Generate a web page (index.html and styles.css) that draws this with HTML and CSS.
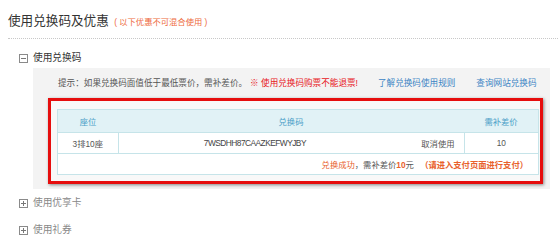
FILE: index.html
```html
<!DOCTYPE html>
<html lang="zh-CN">
<head>
<meta charset="utf-8">
<link rel="stylesheet" href="styles.css">
</head>
<body>
<div class="page">
  <div class="title-bar">
    <span class="title">使用兑换码及优惠</span>
    <span class="subtitle">( 以下优惠不可混合使用 )</span>
  </div>

  <div class="section-head"><span class="toggle minus"></span><span>使用兑换码</span></div>
  <div class="panel">
    <div class="tip">
      <span class="tip-text">提示：如果兑换码面值低于最低票价，需补差价。</span>
      <span class="warn">※ 使用兑换码购票不能退票!</span>
      <a class="link link-rule">了解兑换码使用规则</a>
      <a class="link link-query">查询网站兑换码</a>
    </div>
    <div class="highlight">
      <table class="codes">
        <thead>
          <tr>
            <th class="c-seat">座位</th>
            <th class="c-code">兑换码</th>
            <th class="c-price">需补差价</th>
          </tr>
        </thead>
        <tbody>
          <tr>
            <td class="c-seat">3排10座</td>
            <td class="c-code"><div class="code-cell"><span class="code">7WSDHH87CAAZKEFWYJBY</span><a class="cancel">取消使用</a></div></td>
            <td class="c-price">10</td>
          </tr>
          <tr>
            <td colspan="3" class="result"><span class="ok">兑换成功</span>，需补差价<b class="ok">10</b>元 <span class="ok strong">（请进入支付页面进行支付）</span></td>
          </tr>
        </tbody>
      </table>
    </div>
  </div>

  <div class="section-head closed first"><span class="toggle plus"></span><span>使用优享卡</span></div>
  <div class="section-head closed second"><span class="toggle plus"></span><span>使用礼券</span></div>
</div>
</body>
</html>
```

FILE: styles.css
```css
html, body {
  margin: 0;
  padding: 0;
  background: #ffffff;
}
body {
  font-family: "Liberation Sans", "Noto Sans CJK SC", sans-serif;
  color: #555;
}
.page {
  padding-left: 8px;
  width: 550px;
}
.title-bar {
  margin-top: 10px;
  height: 20px;
  line-height: 20px;
  padding-bottom: 8px;
  border-bottom: 1px dotted #c8c8c8;
  white-space: nowrap;
}
.title {
  font-size: 12.6px;
  color: #333;
}
.subtitle {
  font-size: 8.3px;
  color: #ee6a3c;
  margin-left: 1px;
}
.section-head {
  display: flex;
  align-items: center;
  height: 14px;
  line-height: 14px;
  margin-top: 12px;
  font-size: 9.7px;
  color: #333;
}
.section-head.closed {
  color: #888;
}
.section-head.first {
  margin-top: 7px;
}
.section-head.second {
  margin-top: 13px;
}
.toggle {
  box-sizing: border-box;
  width: 9px;
  height: 9px;
  border: 1px solid #8a8a8a;
  margin-left: 11px;
  margin-right: 5px;
  position: relative;
}
.toggle::before {
  content: "";
  position: absolute;
  left: 1px;
  right: 1px;
  top: 3px;
  height: 1px;
  background: #777;
}
.toggle.plus::after {
  content: "";
  position: absolute;
  top: 1px;
  bottom: 1px;
  left: 3px;
  width: 1px;
  background: #777;
}
.panel {
  margin-top: 3px;
  margin-left: 25px;
  width: 517px;
  background: #f3f3f3;
  padding: 8px 0 5px 0;
}
.tip {
  height: 14px;
  line-height: 14px;
  font-size: 8.6px;
  padding-left: 25px;
  display: flex;
  white-space: nowrap;
}
.tip-text {
  color: #555;
}
.warn {
  color: #e8161b;
  margin-left: 3px;
}
.link {
  color: #3b84c4;
}
.link-rule {
  margin-left: 20px;
}
.link-query {
  margin-left: 21px;
}
.highlight {
  margin-top: 8px;
  margin-left: 15px;
  width: 495px;
  box-sizing: border-box;
  border: 3px solid #e60d0d;
  box-shadow: 1px 1px 3px rgba(0, 0, 0, 0.45);
  background: #f8f8f8;
  padding: 8px 2px 6px 6px;
}
.codes {
  width: 482px;
  border-collapse: collapse;
  background: #ffffff;
  font-size: 8.3px;
  table-layout: fixed;
}
.codes th, .codes td {
  border: 1px solid #c6e4e9;
  padding: 0;
  text-align: center;
}
.codes th {
  background: #e1f2f6;
  color: #4aa0c8;
  font-weight: normal;
  height: 22px;
  border-left: none;
  border-right: none;
}
.codes th.c-seat {
  border-left: 1px solid #c6e4e9;
}
.codes th.c-price {
  border-right: 1px solid #c6e4e9;
}
.codes td {
  height: 20px;
  color: #555;
}
.c-seat {
  width: 60px;
}
.c-price {
  width: 74px;
}
.code-cell {
  display: flex;
  align-items: center;
}
.code {
  flex: 1;
  text-align: center;
  color: #444;
  font-size: 8.4px;
  letter-spacing: -0.55px;
  padding-right: 30px;
}
.cancel {
  color: #555;
  padding-right: 9px;
}
.codes td.result {
  text-align: right;
  padding-right: 10px;
  color: #555;
}
.ok {
  color: #e8612c;
}
b.ok {
  font-weight: bold;
}
.strong {
  font-weight: bold;
  margin-left: 4px;
}
```
